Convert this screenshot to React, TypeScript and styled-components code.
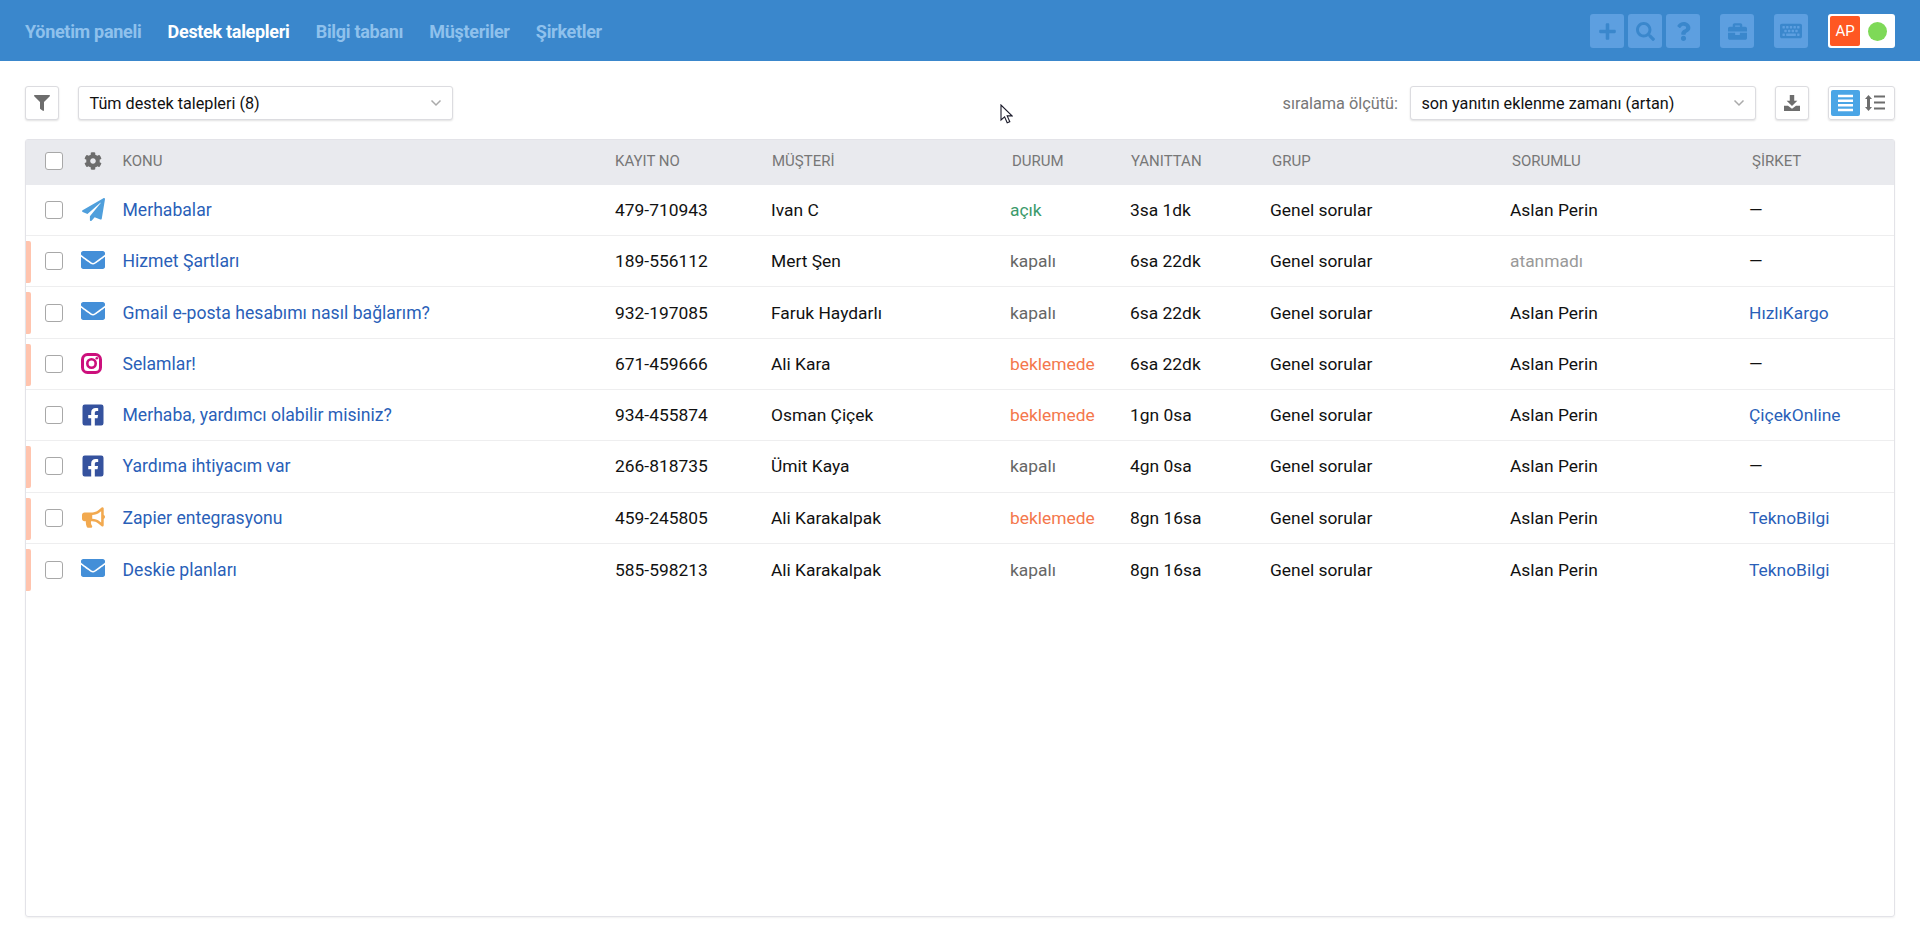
import * as React from "react"
import styled, { createGlobalStyle } from "styled-components"
import {
  FaBriefcase,
  FaBullhorn,
  FaCog,
  FaEnvelope,
  FaFacebookSquare,
  FaFilter,
  FaKeyboard,
  FaPaperPlane,
  FaPlus,
  FaQuestion,
  FaSearch,
} from "react-icons/fa"

const GlobalStyle = createGlobalStyle`
  html, body {
    margin: 0;
    padding: 0;
    background: #fff;
    font-family: Roboto, "Liberation Sans", sans-serif;
    color: #111;
  }
`

const Page = styled.div`
  position: relative;
  width: 1920px;
  height: 940px;
  overflow: hidden;
`

const Topbar = styled.header`
  height: 61px;
  box-sizing: border-box;
  background: #3a87cc;
  padding: 14px 25px 0;
  display: flex;
  justify-content: space-between;
  align-items: flex-start;
`

const Nav = styled.nav`
  display: flex;
  gap: 26.2px;
  height: 34px;
  align-items: center;
`

const NavLink = styled.a<{ $active?: boolean }>`
  font-size: 18px;
  font-weight: 700;
  letter-spacing: -0.3px;
  color: ${(p) => (p.$active ? "#fff" : "#8fc1ec")};
`

const TopActions = styled.div`
  display: flex;
  align-items: center;
`

const TopButton = styled.div<{ $gap?: number }>`
  width: 34px;
  height: 34px;
  margin-left: ${(p) => p.$gap ?? 0}px;
  border-radius: 3px;
  background: #5d9fe0;
  color: #3a87cc;
  display: flex;
  align-items: center;
  justify-content: center;
  font-size: 19px;
`

const UserBox = styled.div`
  width: 67px;
  height: 34px;
  margin-left: 20px;
  box-sizing: border-box;
  padding: 2px;
  border-radius: 3px;
  background: #fff;
  display: flex;
  align-items: center;
`

const Avatar = styled.div`
  width: 30px;
  height: 30px;
  background: #ff5722;
  border-radius: 2px;
  color: #fff;
  font-size: 15px;
  display: flex;
  align-items: center;
  justify-content: center;
`

const StatusDot = styled.div`
  width: 19px;
  height: 19px;
  margin-left: 8px;
  border-radius: 50%;
  background: #7ed957;
`

const Toolbar = styled.div`
  display: flex;
  align-items: center;
  padding: 25px 25px 0;
  height: 34px;
`

const IconButton = styled.div<{ $gap?: number }>`
  width: 34px;
  height: 34px;
  margin-left: ${(p) => p.$gap ?? 0}px;
  box-sizing: border-box;
  border: 1px solid #dcdce0;
  border-radius: 3px;
  box-shadow: 0 1px 2px rgba(0, 0, 0, 0.12);
  background: #fff;
  color: #6d6d6d;
  font-size: 16px;
  display: flex;
  align-items: center;
  justify-content: center;
`

const SelectBox = styled.div<{ $width: number; $gap?: number }>`
  width: ${(p) => p.$width}px;
  height: 34px;
  margin-left: ${(p) => p.$gap ?? 0}px;
  box-sizing: border-box;
  border: 1px solid #dcdce0;
  border-radius: 3px;
  box-shadow: 0 1px 2px rgba(0, 0, 0, 0.12);
  background: #fff;
  padding: 0 10.5px;
  font-size: 16.2px;
  color: #111;
  display: flex;
  align-items: center;
  justify-content: space-between;
`

const Chevron = () => (
  <svg width="12" height="8" viewBox="0 0 12 8">
    <path d="M1.5 1.5 6 6l4.5-4.5" fill="none" stroke="#aaa" strokeWidth="1.5" />
  </svg>
)

const Spacer = styled.div`
  flex: 1;
`

const SortLabel = styled.span`
  font-size: 16.3px;
  color: #777;
  margin-right: 12px;
`

const Toggle = styled.div`
  width: 67px;
  height: 34px;
  margin-left: 19px;
  box-sizing: border-box;
  border: 1px solid #dcdce0;
  border-radius: 3px;
  box-shadow: 0 1px 2px rgba(0, 0, 0, 0.12);
  padding: 2px;
  display: flex;
  align-items: center;
`

const ToggleItem = styled.div<{ $active?: boolean }>`
  width: 29px;
  height: 26px;
  border-radius: 2px;
  background: ${(p) => (p.$active ? "#4aa5e6" : "transparent")};
  display: flex;
  align-items: center;
  justify-content: center;
`

const Table = styled.div`
  margin: 19px 25px 0;
  height: 778px;
  box-sizing: border-box;
  border: 1px solid #e3e3e8;
  border-radius: 3px;
  box-shadow: 0 1px 2px rgba(0, 0, 0, 0.06);
`

const HeadRow = styled.div`
  height: 44.8px;
  box-sizing: border-box;
  padding-bottom: 2px;
  background: #e9eaee;
  display: grid;
  grid-template-columns: 96.5px 492.5px 157px 240px 119px 141px 240px 240px 1fr;
  align-items: center;
  font-size: 15px;
  color: #777;
`

const Row = styled.div<{ $flag?: boolean }>`
  position: relative;
  height: 51.3px;
  box-sizing: border-box;
  border-bottom: 1px solid #eeeeef;
  display: grid;
  grid-template-columns: 96.5px 492.5px 156px 239px 120px 140px 240px 239px 1fr;
  align-items: center;
  font-size: 17.4px;
  color: #111;

  &:last-child {
    border-bottom: none;
  }

  ${(p) =>
    p.$flag &&
    `&::before {
      content: "";
      position: absolute;
      left: 0;
      top: 5px;
      width: 5px;
      height: 42px;
      border-radius: 0 2px 2px 0;
      background: #ffc4ae;
    }`}
`

const TickCell = styled.div`
  display: flex;
  align-items: center;
  padding-left: 19px;
`

const Check = styled.div`
  width: 18px;
  height: 18px;
  box-sizing: border-box;
  border: 1.5px solid #a8a8a8;
  border-radius: 3px;
  background: #fff;
`

const ChannelIcon = styled.div<{ $color: string; $lift: number }>`
  width: 24px;
  margin-left: 18px;
  margin-bottom: ${(p) => p.$lift * 2}px;
  color: ${(p) => p.$color};
  line-height: 0;
  display: flex;
  justify-content: center;
`

const SettingsIcon = styled.div`
  margin-left: 21px;
  color: #6d6d6d;
  font-size: 18px;
  line-height: 0;
`

const Subject = styled.a`
  font-size: 17.6px;
  color: #2a5fb8;
`

const Status = styled.span<{ $color: string }>`
  color: ${(p) => p.$color};
`

const Muted = styled.span`
  color: #999;
`

const CompanyLink = styled.a`
  color: #2a5fb8;
`

const CursorMark = styled.svg`
  position: absolute;
  left: 1000px;
  top: 104px;
`

const LineSpacingIcon = () => (
  <svg width="20" height="18" viewBox="0 0 20 18">
    <path d="M3.5 1 7 5H5v8h2l-3.5 4L0 13h2V5H0z" fill="#6d6d6d" />
    <path d="M9 2.5h11M9 8.5h11M9 14.5h11" stroke="#6d6d6d" strokeWidth="1.8" />
  </svg>
)

const LinesIcon = () => (
  <svg width="15" height="18" viewBox="0 0 15 18">
    <path d="M0 2h15M0 6.7h15M0 11.3h15M0 16h15" stroke="#fff" strokeWidth="2.4" />
  </svg>
)

const DownloadIcon = () => (
  <svg width="16" height="16" viewBox="0 0 18 18">
    <path d="M6.5 0h5v6.5H15L9 12.5 3 6.5h3.5z" fill="#6d6d6d" />
    <path d="M0 12h4.5L9 15.5 13.5 12H18v6H0z" fill="#6d6d6d" />
  </svg>
)

const InstagramIcon = () => (
  <svg width="24" height="21" viewBox="0 0 24 21">
    <rect x="1.5" y="1.5" width="18" height="18" rx="5" fill="none" stroke="#cc0f7c" strokeWidth="3" />
    <circle cx="10.5" cy="10.5" r="4.2" fill="none" stroke="#cc0f7c" strokeWidth="2.6" />
    <circle cx="15.8" cy="5.2" r="1.3" fill="#cc0f7c" />
  </svg>
)

type Channel = "telegram" | "mail" | "instagram" | "facebook" | "zapier"

interface ITicket {
  channel: Channel
  subject: string
  number: string
  customer: string
  status: "açık" | "kapalı" | "beklemede"
  replied: string
  assignee?: string
  company?: string
  flag?: boolean
}

const tickets: ITicket[] = [
  { channel: "telegram", subject: "Merhabalar", number: "479-710943", customer: "Ivan C", status: "açık", replied: "3sa 1dk", assignee: "Aslan Perin" },
  { channel: "mail", subject: "Hizmet Şartları", number: "189-556112", customer: "Mert Şen", status: "kapalı", replied: "6sa 22dk", flag: true },
  { channel: "mail", subject: "Gmail e-posta hesabımı nasıl bağlarım?", number: "932-197085", customer: "Faruk Haydarlı", status: "kapalı", replied: "6sa 22dk", assignee: "Aslan Perin", company: "HızlıKargo", flag: true },
  { channel: "instagram", subject: "Selamlar!", number: "671-459666", customer: "Ali Kara", status: "beklemede", replied: "6sa 22dk", assignee: "Aslan Perin", flag: true },
  { channel: "facebook", subject: "Merhaba, yardımcı olabilir misiniz?", number: "934-455874", customer: "Osman Çiçek", status: "beklemede", replied: "1gn 0sa", assignee: "Aslan Perin", company: "ÇiçekOnline" },
  { channel: "facebook", subject: "Yardıma ihtiyacım var", number: "266-818735", customer: "Ümit Kaya", status: "kapalı", replied: "4gn 0sa", assignee: "Aslan Perin", flag: true },
  { channel: "zapier", subject: "Zapier entegrasyonu", number: "459-245805", customer: "Ali Karakalpak", status: "beklemede", replied: "8gn 16sa", assignee: "Aslan Perin", company: "TeknoBilgi", flag: true },
  { channel: "mail", subject: "Deskie planları", number: "585-598213", customer: "Ali Karakalpak", status: "kapalı", replied: "8gn 16sa", assignee: "Aslan Perin", company: "TeknoBilgi", flag: true },
]

const statusColors = { "açık": "#3b9a6b", "kapalı": "#666", beklemede: "#f4774c" }

const channelIcons = {
  telegram: { color: "#4f9fdc", lift: 0, icon: <FaPaperPlane size={23} /> },
  mail: { color: "#448fd8", lift: 1.5, icon: <FaEnvelope size={24} /> },
  instagram: { color: "#cc0f7c", lift: 0.5, icon: <InstagramIcon /> },
  facebook: { color: "#35529e", lift: 0, icon: <FaFacebookSquare size={24} /> },
  zapier: { color: "#f2a94f", lift: 0.5, icon: <FaBullhorn size={23} /> },
}

export default function App() {
  return (
    <Page>
      <GlobalStyle />
      <Topbar>
        <Nav>
          <NavLink>Yönetim paneli</NavLink>
          <NavLink $active>Destek talepleri</NavLink>
          <NavLink>Bilgi tabanı</NavLink>
          <NavLink>Müşteriler</NavLink>
          <NavLink>Şirketler</NavLink>
        </Nav>
        <TopActions>
          <TopButton><FaPlus /></TopButton>
          <TopButton $gap={4}><FaSearch /></TopButton>
          <TopButton $gap={4}><FaQuestion /></TopButton>
          <TopButton $gap={20}><FaBriefcase /></TopButton>
          <TopButton $gap={20}><FaKeyboard size={22} /></TopButton>
          <UserBox>
            <Avatar>AP</Avatar>
            <StatusDot />
          </UserBox>
        </TopActions>
      </Topbar>

      <Toolbar>
        <IconButton><FaFilter /></IconButton>
        <SelectBox $width={375} $gap={19}>
          Tüm destek talepleri (8)
          <Chevron />
        </SelectBox>
        <Spacer />
        <SortLabel>sıralama ölçütü:</SortLabel>
        <SelectBox $width={346}>
          son yanıtın eklenme zamanı (artan)
          <Chevron />
        </SelectBox>
        <IconButton $gap={19}><DownloadIcon /></IconButton>
        <Toggle>
          <ToggleItem $active><LinesIcon /></ToggleItem>
          <ToggleItem><LineSpacingIcon /></ToggleItem>
        </Toggle>
      </Toolbar>

      <Table>
        <HeadRow>
          <TickCell>
            <Check />
            <SettingsIcon><FaCog /></SettingsIcon>
          </TickCell>
          <span>KONU</span>
          <span>KAYIT NO</span>
          <span>MÜŞTERİ</span>
          <span>DURUM</span>
          <span>YANITTAN</span>
          <span>GRUP</span>
          <span>SORUMLU</span>
          <span>ŞİRKET</span>
        </HeadRow>
        {tickets.map((t) => (
          <Row key={t.number} $flag={t.flag}>
            <TickCell>
              <Check />
              <ChannelIcon $color={channelIcons[t.channel].color} $lift={channelIcons[t.channel].lift}>
                {channelIcons[t.channel].icon}
              </ChannelIcon>
            </TickCell>
            <Subject>{t.subject}</Subject>
            <span>{t.number}</span>
            <span>{t.customer}</span>
            <Status $color={statusColors[t.status]}>{t.status}</Status>
            <span>{t.replied}</span>
            <span>Genel sorular</span>
            {t.assignee ? <span>{t.assignee}</span> : <Muted>atanmadı</Muted>}
            {t.company ? <CompanyLink>{t.company}</CompanyLink> : <span>—</span>}
          </Row>
        ))}
      </Table>

      <CursorMark width="13" height="20" viewBox="0 0 13 20">
        <path d="M1 1v15l3.6-3.2 2.6 6 2.6-1.1-2.6-5.8H12z" fill="#fff" stroke="#1a1a2a" strokeWidth="1.1" />
      </CursorMark>
    </Page>
  )
}
